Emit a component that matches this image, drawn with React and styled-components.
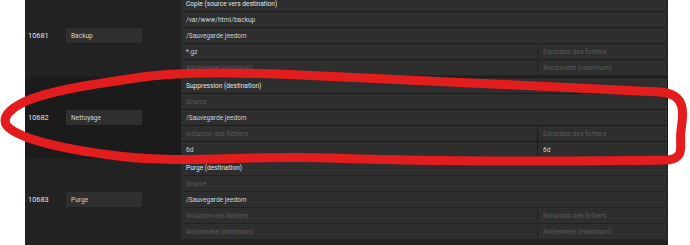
import React from 'react';
import styled, { createGlobalStyle } from 'styled-components';

const GlobalStyle = createGlobalStyle`
	html, body {
		margin: 0;
		padding: 0;
		background: #ffffff;
		overflow: hidden;
	}
	body {
		width: 690px;
		height: 245px;
		font-family: Roboto, 'Liberation Sans', sans-serif;
	}
`;

const Page = styled.div`
	position: relative;
	width: 690px;
	height: 245px;
	overflow: hidden;
`;

const Panel = styled.div`
	margin-left: 25px;
	margin-top: -5px;
	width: 643px;
	height: 260px;
	background: #222222;
	display: flex;
	flex-direction: column;
`;

const Group = styled.div`
	display: grid;
	grid-template-columns: 41px 76px 39px 1fr;
	align-items: center;
	padding: 1px 1px 2px 0;
	background: ${(p) => (p.$dark ? '#1b1b1b' : '#222222')};
`;

const Id = styled.div`
	padding-left: 3px;
	font-size: 7.4px;
	color: #e4e4e4;
`;

const NameBox = styled.div`
	height: 15px;
	display: flex;
	align-items: center;
	padding-left: 5px;
	background: #2f2f2f;
	font-size: 6.6px;
	color: #cfcfcf;
`;

const Rows = styled.div`
	grid-column: 4;
	display: flex;
	flex-direction: column;
	gap: 1px;
`;

const Row = styled.div`
	display: grid;
	grid-template-columns: ${(p) => (p.$split ? '356px 1fr' : '1fr')};
	gap: 1px;
	height: 15px;
`;

const Cell = styled.div`
	display: flex;
	align-items: center;
	padding-left: 5px;
	background: #2e2e2e;
	font-size: 6.6px;
	white-space: nowrap;
	overflow: hidden;
	color: ${(p) =>
		p.$hint ? '#5c5c5c' : p.$title ? '#e6e6e6' : '#d2d2d2'};
`;

const Scribble = styled.svg`
	position: absolute;
	left: 0;
	top: 0;
	pointer-events: none;
`;

const groups = [
	{
		id: '10681',
		name: 'Backup',
		rows: [
			[{ t: 'Copie (source vers destination)', title: true }],
			[{ t: '/var/www/html/backup' }],
			[{ t: '/Sauvegarde jeedom' }],
			[{ t: '*.gz' }, { t: 'Exclusion des fichiers', hint: true }],
			[
				{ t: 'Ancienneté (minimum)', hint: true },
				{ t: 'Ancienneté (maximum)', hint: true },
			],
		],
	},
	{
		id: '10682',
		name: 'Nettoyage',
		dark: true,
		rows: [
			[{ t: 'Suppression (destination)', title: true }],
			[{ t: 'Source', hint: true }],
			[{ t: '/Sauvegarde jeedom' }],
			[
				{ t: 'Inclusion des fichiers', hint: true },
				{ t: 'Exclusion des fichiers', hint: true },
			],
			[{ t: '6d' }, { t: '6d' }],
		],
	},
	{
		id: '10683',
		name: 'Purge',
		rows: [
			[{ t: 'Purge (destination)', title: true }],
			[{ t: 'Source', hint: true }],
			[{ t: '/Sauvegarde jeedom' }],
			[
				{ t: 'Inclusion des fichiers', hint: true },
				{ t: 'Exclusion des fichiers', hint: true },
			],
			[
				{ t: 'Ancienneté (minimum)', hint: true },
				{ t: 'Ancienneté (maximum)', hint: true },
			],
		],
	},
];

function App() {
	return (
		<Page>
			<GlobalStyle />
			<Panel>
				{groups.map((g) => (
					<Group key={g.id} $dark={g.dark}>
						<Id>{g.id}</Id>
						<NameBox>{g.name}</NameBox>
						<Rows>
							{g.rows.map((cells, i) => (
								<Row key={i} $split={cells.length > 1}>
									{cells.map((c, j) => (
										<Cell key={j} $hint={c.hint} $title={c.title}>
											{c.t}
										</Cell>
									))}
								</Row>
							))}
						</Rows>
					</Group>
				))}
			</Panel>
			<Scribble width="690" height="245" viewBox="0 0 690 245">
				<path
					d="M 143 77 C 180 72, 230 72, 300 75 C 400 79, 550 87, 660 92 C 686 94, 684 112, 681 130 C 679 146, 686 158, 668 160 C 600 161, 450 162, 330 158 C 250 155, 180 164, 118 156 C 70 150, 20 140, 7 126 C 0 116, 14 105, 34 98 C 60 89, 100 83, 150 76"
					fill="none"
					stroke="#e31d1d"
					strokeWidth="9"
					strokeLinecap="round"
					strokeLinejoin="round"
				/>
			</Scribble>
		</Page>
	);
}

export default App;
